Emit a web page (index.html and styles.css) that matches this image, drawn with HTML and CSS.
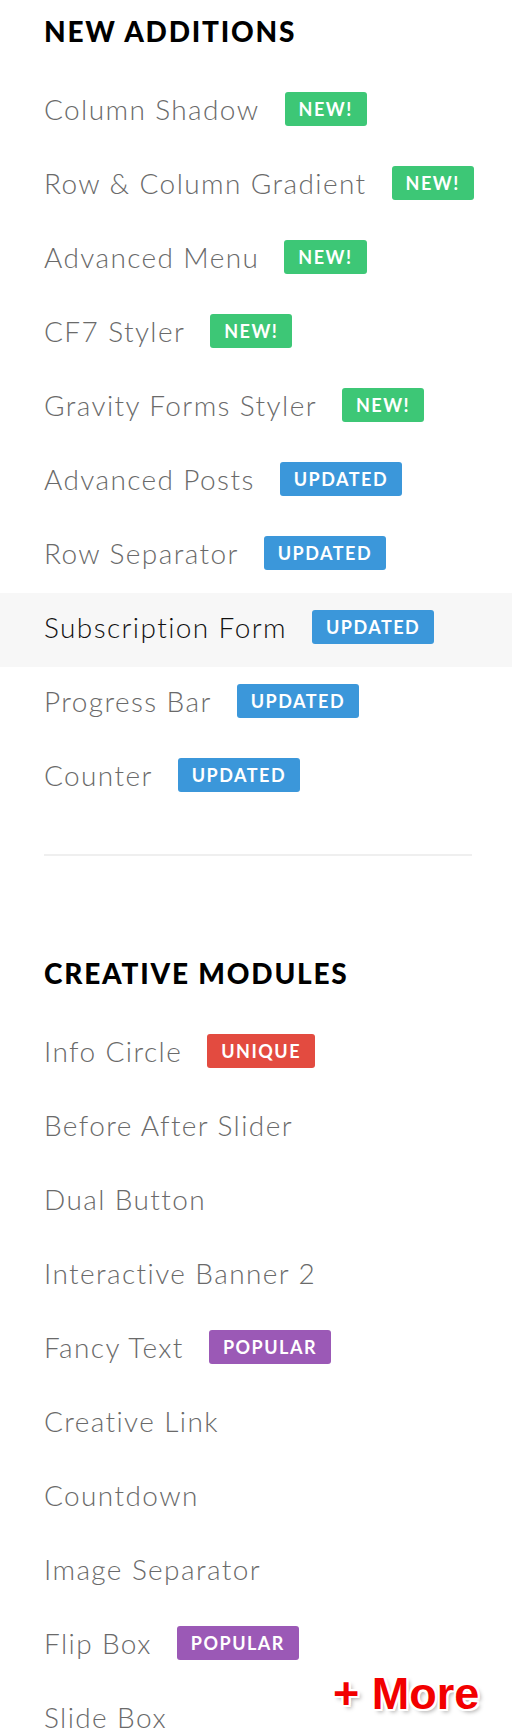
FILE: index.html
```html
<!DOCTYPE html>
<html>
<head>
<meta charset="utf-8">
<link rel="stylesheet" href="styles.css">
</head>
<body>
<div class="page">
  <section class="group">
    <h2 class="heading">NEW ADDITIONS</h2>
    <ul class="list">
      <li class="item"><span class="name">Column Shadow</span><span class="badge green">NEW!</span></li>
      <li class="item"><span class="name">Row &amp; Column Gradient</span><span class="badge green">NEW!</span></li>
      <li class="item"><span class="name">Advanced Menu</span><span class="badge green">NEW!</span></li>
      <li class="item"><span class="name">CF7 Styler</span><span class="badge green">NEW!</span></li>
      <li class="item"><span class="name">Gravity Forms Styler</span><span class="badge green">NEW!</span></li>
      <li class="item"><span class="name">Advanced Posts</span><span class="badge blue">UPDATED</span></li>
      <li class="item"><span class="name">Row Separator</span><span class="badge blue">UPDATED</span></li>
      <li class="item active"><span class="name">Subscription Form</span><span class="badge blue">UPDATED</span></li>
      <li class="item"><span class="name">Progress Bar</span><span class="badge blue">UPDATED</span></li>
      <li class="item"><span class="name">Counter</span><span class="badge blue">UPDATED</span></li>
    </ul>
    <hr class="divider">
  </section>
  <section class="group second">
    <h2 class="heading">CREATIVE MODULES</h2>
    <ul class="list">
      <li class="item"><span class="name">Info Circle</span><span class="badge red">UNIQUE</span></li>
      <li class="item"><span class="name">Before After Slider</span></li>
      <li class="item"><span class="name">Dual Button</span></li>
      <li class="item"><span class="name">Interactive Banner 2</span></li>
      <li class="item"><span class="name">Fancy Text</span><span class="badge purple">POPULAR</span></li>
      <li class="item"><span class="name">Creative Link</span></li>
      <li class="item"><span class="name">Countdown</span></li>
      <li class="item"><span class="name">Image Separator</span></li>
      <li class="item"><span class="name">Flip Box</span><span class="badge purple">POPULAR</span></li>
      <li class="item"><span class="name">Slide Box</span></li>
    </ul>
  </section>
  <div class="more">+ More</div>
</div>
</body>
</html>
```
FILE: styles.css
```css
* { box-sizing: border-box; }
html, body {
  margin: 0;
  padding: 0;
  background: #fff;
}
body {
  width: 512px;
  height: 1728px;
  overflow: hidden;
  font-family: Lato, "Open Sans", sans-serif;
}
.page {
  position: relative;
  padding-top: 14px;
}
.heading {
  margin: 0 0 27px 0;
  padding-left: 44px;
  font-size: 28px;
  line-height: 34px;
  font-weight: 900;
  letter-spacing: 1.8px;
  color: #000;
}
.list {
  list-style: none;
  margin: 0;
  padding: 0;
}
.item {
  display: flex;
  align-items: center;
  height: 74px;
  padding: 0 0 6px 44px;
  font-size: 28px;
  line-height: 34px;
  font-weight: 300;
  letter-spacing: 1.4px;
  color: #6a6a6a;
}
.item.active {
  background: #f7f7f7;
  color: #111;
}
.name {
  white-space: nowrap;
}
.badge {
  margin-left: 25px;
  height: 34px;
  padding: 0 14px;
  border-radius: 3px;
  display: flex;
  align-items: center;
  font-size: 18px;
  font-weight: 700;
  letter-spacing: 1.5px;
  color: #fff;
}
.green { background: #3dc776; }
.blue { background: #3b97da; }
.red { background: #e34b40; }
.purple { background: #9b59b6; }
.divider {
  margin: 39px 40px 0 44px;
  border: 0;
  height: 2px;
  background: #efefef;
}
.second {
  margin-top: 100px;
}
.more {
  position: absolute;
  left: 333px;
  top: 1671px;
  font-family: "Liberation Sans", Arial, sans-serif;
  font-weight: 700;
  font-size: 45px;
  line-height: 45px;
  color: #f20000;
  white-space: nowrap;
  text-shadow:
    2px 0 #fff, -2px 0 #fff, 0 2px #fff, 0 -2px #fff,
    2px 2px #fff, -2px -2px #fff, 2px -2px #fff, -2px 2px #fff,
    3px 3px 4px rgba(0,0,0,0.35);
}
```
